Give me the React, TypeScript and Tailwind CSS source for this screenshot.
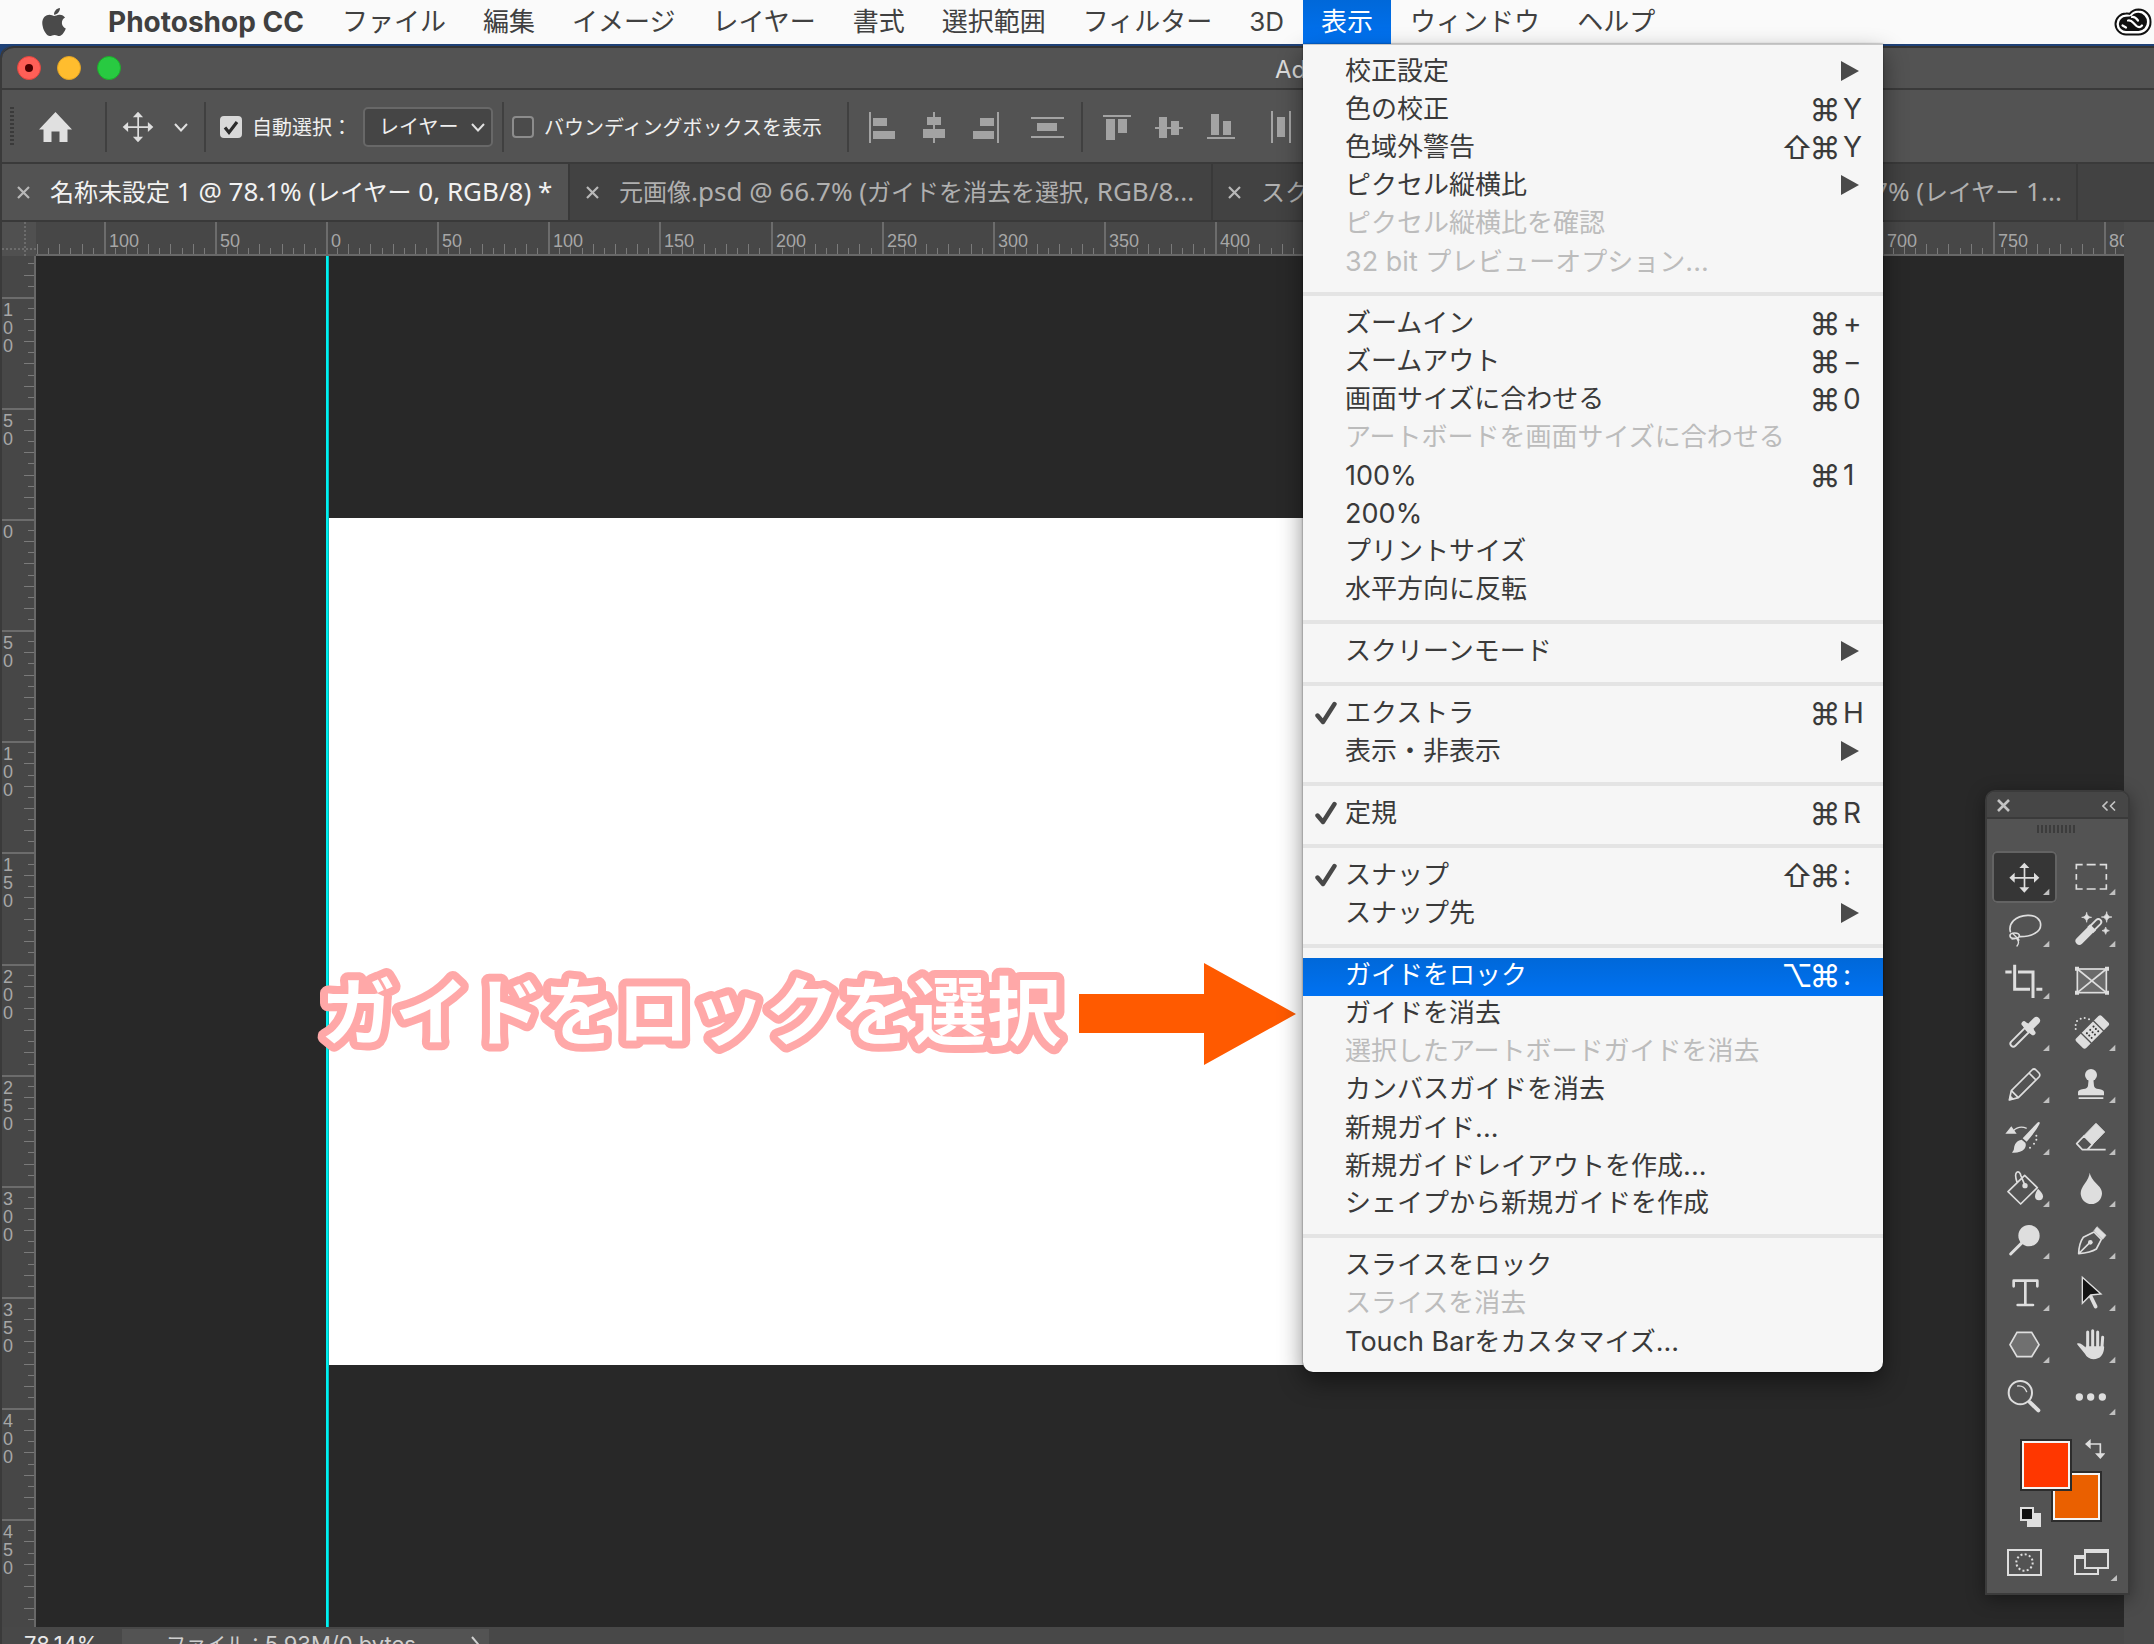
import React from "react";
import { FaApple } from "react-icons/fa";

const JP = "font-['Inter','Noto_Sans_CJK_JP',sans-serif]";
const CJK = "font-['Noto_Sans_CJK_JP',sans-serif]";

// Sets runs of Latin text in their own face and size beside the Japanese text.
function Mixed({ text, latin }: { text: string; latin: string }) {
  return (
    <>
      {text.split(/([\x20-\x7e]+)/).filter(Boolean).map((part, i) =>
        /^[\x20-\x7e]+$/.test(part) ? (
          <span key={i} className={`whitespace-pre ${latin}`}>{part}</span>
        ) : (
          <React.Fragment key={i}>{part}</React.Fragment>
        ),
      )}
    </>
  );
}

type Item = {
  label: string;
  mods?: string[];
  keyName?: string;
  sub?: boolean;
  checked?: boolean;
  disabled?: boolean;
  active?: boolean;
};

const groups: Item[][] = [
  [
    { label: "校正設定", sub: true },
    { label: "色の校正", mods: ["⌘"], keyName: "Y" },
    { label: "色域外警告", mods: ["⇧", "⌘"], keyName: "Y" },
    { label: "ピクセル縦横比", sub: true },
    { label: "ピクセル縦横比を確認", disabled: true },
    { label: "32 bit プレビューオプション...", disabled: true },
  ],
  [
    { label: "ズームイン", mods: ["⌘"], keyName: "+" },
    { label: "ズームアウト", mods: ["⌘"], keyName: "−" },
    { label: "画面サイズに合わせる", mods: ["⌘"], keyName: "0" },
    { label: "アートボードを画面サイズに合わせる", disabled: true },
    { label: "100%", mods: ["⌘"], keyName: "1" },
    { label: "200%" },
    { label: "プリントサイズ" },
    { label: "水平方向に反転" },
  ],
  [{ label: "スクリーンモード", sub: true }],
  [
    { label: "エクストラ", mods: ["⌘"], keyName: "H", checked: true },
    { label: "表示・非表示", sub: true },
  ],
  [{ label: "定規", mods: ["⌘"], keyName: "R", checked: true }],
  [
    { label: "スナップ", mods: ["⇧", "⌘"], keyName: ":", checked: true },
    { label: "スナップ先", sub: true },
  ],
  [
    { label: "ガイドをロック", mods: ["⌥", "⌘"], keyName: ":", active: true },
    { label: "ガイドを消去" },
    { label: "選択したアートボードガイドを消去", disabled: true },
    { label: "カンバスガイドを消去" },
    { label: "新規ガイド..." },
    { label: "新規ガイドレイアウトを作成..." },
    { label: "シェイプから新規ガイドを作成" },
  ],
  [
    { label: "スライスをロック" },
    { label: "スライスを消去", disabled: true },
    { label: "Touch Barをカスタマイズ..." },
  ],
];

function MenuRow({ item }: { item: Item }) {
  const tone = item.active
    ? "bg-linear-to-b from-[#0068d9] to-[#0072f2] text-white"
    : item.disabled
      ? "text-[#bcbcbc]"
      : "text-[#3a3a3a]";
  return (
    <button
      type="button"
      role="menuitem"
      disabled={item.disabled}
      className={`flex h-[38px] w-full items-center pb-1 pl-3 text-left text-[26px] leading-none whitespace-nowrap ${tone}`}
    >
      <span className="flex w-[30px] shrink-0 items-center">
        {item.checked && (
          <svg viewBox="0 0 22 24" className="h-6 w-[22px]" aria-hidden="true">
            <path d="M2.5 14.5 8 21 19.5 3" fill="none" stroke="#484848" strokeWidth="4.4" strokeLinecap="round" strokeLinejoin="round" />
          </svg>
        )}
      </span>
      <span className="flex-1"><Mixed text={item.label} latin="text-[27px] leading-none" /></span>
      {item.sub && (
        <svg viewBox="0 0 18 20" className="mr-6 h-5 w-[18px]" aria-hidden="true">
          <path d="M0 0 18 10 0 20Z" fill="#4a4a4a" />
        </svg>
      )}
      {item.mods && (
        <span className="flex shrink-0 items-center">
          {item.mods.map((m) => (
            <span key={m} className="flex w-7 justify-center text-[31px] leading-none">{m}</span>
          ))}
          <span className="ml-1 w-10 text-[28px] leading-none">{item.keyName}</span>
        </span>
      )}
    </button>
  );
}

function ViewMenu() {
  return (
    <div
      role="menu"
      aria-label="表示"
      className="absolute top-full left-0 z-30 w-[580px] rounded-b-[10px] border-t border-[#c8c8c8] bg-[#f6f6f6] pt-[9px] pb-[10px] font-normal shadow-[0_10px_24px_rgba(0,0,0,0.45),0_0_2px_rgba(0,0,0,0.6)]"
    >
      {groups.map((g, i) => (
        <div key={i} role="group">
          {i > 0 && <div role="separator" className="my-[10px] h-1 bg-[#e4e4e4]" />}
          {g.map((it) => (
            <MenuRow key={it.label} item={it} />
          ))}
        </div>
      ))}
    </div>
  );
}

function MenuBar() {
  const left = ["ファイル", "編集", "イメージ", "レイヤー", "書式", "選択範囲", "フィルター", "3D"];
  const right = ["ウィンドウ", "ヘルプ"];
  const cls = "h-11 shrink-0 px-[18px] text-[26px] leading-none whitespace-nowrap";
  return (
    <nav className={`relative z-30 flex h-11 shrink-0 items-center gap-px bg-[#fafafa] text-[#404040] ${JP}`}>
      <button type="button" aria-label="Apple" className="ml-10 flex w-7 justify-center">
        <FaApple className="h-8 w-8 shrink-0 text-[#4a4a4a]" />
      </button>
      <button type="button" className="ml-[21px] h-11 w-[233px] shrink-0 pl-[18px] text-left text-[28px] leading-none font-bold whitespace-nowrap">
        Photoshop CC
      </button>
      {left.map((t) => (
        <button key={t} type="button" className={cls}>{t}</button>
      ))}
      <div className="relative shrink-0">
        <button type="button" aria-expanded="true" className={`${cls} block bg-linear-to-b from-[#0068d9] to-[#0072f2] text-white`}>表示</button>
        <ViewMenu />
      </div>
      {right.map((t) => (
        <button key={t} type="button" className={cls}>{t}</button>
      ))}
      <button type="button" aria-label="Creative Cloud" className="mr-[2px] ml-auto">
        <svg viewBox="0 0 38 28" className="h-7 w-[38px]" aria-hidden="true">
          <path d="M24.5 1.5A12 12 0 0 1 36.500 14 12.200 12.200 0 0 1 24.500 26.500H12A10.600 10.600 0 0 1 1.500 16 10.600 10.600 0 0 1 12 5.500Q14 5.300 15.500 5.800A12 12 0 0 1 24.500 1.500Z" fill="#fff" stroke="#111" strokeWidth="2" />
          <path d="M24.500 4.800A9 9 0 0 1 33 14 9 9 0 0 1 24.500 23H12A7.300 7.300 0 0 1 4.800 16 7.300 7.300 0 0 1 12 8.800Q15.500 8.600 17.600 8A8.500 8.500 0 0 1 24.500 4.800Z" fill="#111" />
          <path d="M12 19.500 8.500 17.500M14 12.500Q17 12 19 14.500L22.500 18Q25.500 20.500 28 17.500M18 9Q21 8.500 24 12.500" fill="none" stroke="#fff" strokeWidth="2.200" strokeLinecap="round" />
        </svg>
      </button>
    </nav>
  );
}

function TitleBar() {
  return (
    <header className="flex h-[44px] shrink-0 items-center rounded-tl-[12px] border-t-2 border-b-2 border-t-[#343434] border-b-[#3a3a3a] bg-[#535353] pl-[15px]">
      <div className="flex gap-4">
        <button type="button" aria-label="閉じる" className="flex size-6 items-center justify-center rounded-full border border-[#e2463f] bg-[#ff5f57]">
          <span className="size-2 rounded-full bg-[#4d0000]" />
        </button>
        <button type="button" aria-label="しまう" className="size-6 rounded-full border border-[#e1a325] bg-[#ffbd2e]" />
        <button type="button" aria-label="フルスクリーン" className="size-6 rounded-full border border-[#1dad2b] bg-[#28ca41]" />
      </div>
      <h1 className={`ml-[1154px] pt-1 text-2xl leading-none whitespace-nowrap text-[#dcdcdc] ${JP}`}>Adobe Photoshop CC 2019</h1>
    </header>
  );
}

function Divider({ className = "" }: { className?: string }) {
  return <span className={`h-[50px] w-[2px] shrink-0 bg-[#404040] ${className}`} />;
}

function Chevron({ className = "" }: { className?: string }) {
  return (
    <svg viewBox="0 0 14 9" className={`h-[9px] w-[14px] ${className}`} aria-hidden="true">
      <path d="M1 1 7 7.500 13 1" fill="none" stroke="#e0e0e0" strokeWidth="2" />
    </svg>
  );
}

function MoveGlyph() {
  return (
    <g fill="#dedede">
      <path d="M192 262h5v62h-5zM163 291h62v5h-62z" />
      <path d="M194 248 209 264H179ZM194 338 209 322H179ZM149 293 165 278V308ZM239 293 223 278V308Z" />
    </g>
  );
}

function Check({ on, label }: { on: boolean; label: string }) {
  return (
    <label className="flex items-center gap-[10px] text-xl leading-none whitespace-nowrap text-[#efefef]">
      <span className="relative flex size-[22px]">
        <input
          type="checkbox"
          defaultChecked={on}
          className="size-[22px] appearance-none rounded-[4px] border-2 border-[#8c8c8c] bg-[#4b4b4b] checked:border-[#d8d8d8] checked:bg-[#d8d8d8]"
        />
        {on && (
          <svg viewBox="0 0 22 22" className="pointer-events-none absolute inset-0 size-[22px]" aria-hidden="true">
            <path d="M5 11.500 9 16.500 17 6" fill="none" stroke="#2b2b2b" strokeWidth="3.200" />
          </svg>
        )}
      </span>
      <span>{label}</span>
    </label>
  );
}

const aligns: { w: number; cls: string; name: string; d: string }[] = [
  { name: "左端揃え", w: 26, cls: "ml-5 w-[26px]", d: "M0 1h2v31H0zM4 7h14v8H4zM4 20h22v8H4z" },
  { name: "水平方向中央揃え", w: 22, cls: "ml-7 w-[22px]", d: "M10 1h2v31h-2zM4 6h14v8H4zM0 18h22v9H0z" },
  { name: "右端揃え", w: 26, cls: "ml-7 w-[26px]", d: "M24 1h2v31h-2zM7 7h14v8H7zM0 20h21v8H0z" },
  { name: "垂直方向に分布", w: 33, cls: "ml-8 w-[33px]", d: "M0 6h33v2H0zM6 12h20v8H6zM0 25h33v2H0z" },
  { name: "上端揃え", w: 28, cls: "ml-5 w-[28px]", d: "M0 4h28v2H0zM3 8h9v21H3zM15 8h9v14h-9z" },
  { name: "垂直方向中央揃え", w: 28, cls: "ml-6 w-[28px]", d: "M0 16h28v2H0zM4 6h8v21H4zM16 10h8v14h-8z" },
  { name: "下端揃え", w: 28, cls: "ml-6 w-[28px]", d: "M0 26h28v2H0zM4 3h8v21H4zM16 10h8v14h-8z" },
  { name: "水平方向に分布", w: 20, cls: "ml-9 w-[20px]", d: "M0 0h2v32H0zM18 0h2v32h-2zM6 6h8v20H6z" },
];

function AlignButton({ a }: { a: (typeof aligns)[number] }) {
  return (
    <button type="button" aria-label={a.name} className={`h-8 shrink-0 ${a.cls}`}>
      <svg viewBox={`0 0 ${a.w} 32`} className="h-8 w-full" aria-hidden="true">
        <path d={a.d} fill="#a3a3a3" />
      </svg>
    </button>
  );
}

function OptionsBar() {
  return (
    <div className={`flex h-[74px] shrink-0 items-center border-b-2 border-[#3a3a3a] bg-[#535353] pt-[2px] pl-2 ${CJK}`}>
      <span className="h-10 w-1 bg-[repeating-linear-gradient(to_bottom,#3a3a3a_0_2px,#535353_2px_4px)]" />
      <button type="button" aria-label="ホーム" className="ml-[25px]">
        <svg viewBox="0 0 33 30" className="h-[30px] w-[33px]" aria-hidden="true">
          <path d="M16.500 0 33 17.500H28.500V30H20.500V19.500H12.500V30H4.500V17.500H0Z" fill="#e0e0e0" />
        </svg>
      </button>
      <Divider className="ml-[33px]" />
      <button type="button" aria-label="移動ツール" className="ml-[15px] flex items-center gap-5">
        <svg viewBox="147 246 94 94" className="size-8" aria-hidden="true"><MoveGlyph /></svg>
        <Chevron />
      </button>
      <Divider className="ml-4" />
      <div className="ml-[14px]"><Check on label="自動選択：" /></div>
      <div className="relative ml-[11px] flex items-center">
        <select
          aria-label="自動選択の対象"
          className="h-10 w-[130px] appearance-none rounded-[5px] border-2 border-[#686868] bg-[#454545] pb-[2px] pl-[14px] text-xl leading-none text-[#efefef]"
        >
          <option>レイヤー</option>
        </select>
        <Chevron className="pointer-events-none absolute right-2" />
      </div>
      <Divider className="ml-[9px]" />
      <div className="ml-2"><Check on={false} label="バウンディングボックスを表示" /></div>
      <Divider className="ml-[25px]" />
      {aligns.slice(0, 4).map((a) => <AlignButton key={a.name} a={a} />)}
      <Divider className="ml-[17px]" />
      {aligns.slice(4).map((a) => <AlignButton key={a.name} a={a} />)}
    </div>
  );
}

function Tab({ label, active, className }: { label: string; active?: boolean; className: string }) {
  return (
    <div
      className={`flex h-full shrink-0 items-center overflow-hidden border-r-2 border-[#393939] whitespace-nowrap ${active ? "bg-[#535353] text-[#f2f2f2]" : "bg-[#424242] text-[#b0b0b0]"} ${className}`}
    >
      <button type="button" aria-label="タブを閉じる" className="shrink-0">
        <svg viewBox="0 0 13 13" className="size-[13px]" aria-hidden="true">
          <path d="M1 1 12 12M12 1 1 12" stroke="#b8b8b8" strokeWidth="2.200" />
        </svg>
      </button>
      <button type="button" role="tab" aria-selected={!!active} className="ml-5 flex-1 pb-[2px] text-left text-2xl leading-none">
        <Mixed text={label} latin="font-['Noto_Sans',sans-serif] text-[26px] leading-none" />
      </button>
    </div>
  );
}

function Tabs() {
  return (
    <div role="tablist" className={`flex h-[58px] shrink-0 border-b-2 border-[#393939] bg-[#424242] ${CJK}`}>
      <Tab active label="名称未設定 1 @ 78.1% (レイヤー 0, RGB/8) *" className="w-[568px] pl-[15px]" />
      <Tab label="元画像.psd @ 66.7% (ガイドを消去を選択, RGB/8..." className="w-[643px] pl-4" />
      <Tab label="スクリーンショット.png" className="w-[430px] pl-[15px]" />
      <Tab label="背景.psd @ 66.7% (レイヤー 1..." className="w-[435px] pl-6" />
    </div>
  );
}

const STEP = 11.113;
const range = (from: number, to: number) => Array.from({ length: to - from + 1 }, (_, i) => i + from);

function TopRuler() {
  const ticks = range(-26, 164);
  return (
    <div className="h-[34px] flex-1 overflow-hidden border-b-2 border-[#686868] bg-[#474747]">
      <svg width="100%" height="32" className="block" role="img" aria-label="水平定規">
        {ticks.map((i) => {
          const x = Math.round(290 + i * STEP);
          const major = i % 10 === 0;
          const h = major ? 32 : i % 2 === 0 ? 10 : 6;
          return <rect key={i} x={x} y={32 - h} width={major ? 2 : 1} height={h} fill={major ? "#6c6c6c" : "#7a7a7a"} />;
        })}
        {ticks.filter((i) => i % 10 === 0).map((i) => (
          <text key={i} x={Math.round(295 + i * STEP)} y="25" fontSize="18" fill="#a6a6a6" className="font-['Liberation_Sans',sans-serif]">
            {Math.abs(i * 5)}
          </text>
        ))}
      </svg>
    </div>
  );
}

function SideRuler() {
  const ticks = range(-23, 100);
  return (
    <div className="w-[34px] shrink-0 overflow-hidden border-r-2 border-[#686868] bg-[#474747]">
      <svg width="32" height="1372" className="block" role="img" aria-label="垂直定規">
        {ticks.map((i) => {
          const y = Math.round(263 + i * STEP);
          const major = i % 10 === 0;
          const w = major ? 32 : i % 2 === 0 ? 10 : 6;
          return <rect key={i} x={32 - w} y={y} width={w} height={major ? 2 : 1} fill={major ? "#6c6c6c" : "#7a7a7a"} />;
        })}
        {ticks.filter((i) => i % 10 === 0).map((i) =>
          String(Math.abs(i * 5)).split("").map((c, k) => (
            <text key={`${i}-${k}`} x="1" y={Math.round(282 + i * STEP + k * 18)} fontSize="18" fill="#a6a6a6" className="font-['Liberation_Sans',sans-serif]">
              {c}
            </text>
          )),
        )}
      </svg>
    </div>
  );
}

function Canvas() {
  return (
    <div className="relative min-w-0 flex-1 overflow-hidden bg-[#282828]">
      <div className="mt-[262px] ml-[292px] h-[847px] w-[1180px] bg-white" />
      <div className="absolute inset-y-0 left-[290px] w-[3px] border-r border-black/20 bg-[#00f0f0]" />
      <svg viewBox="0 0 770 110" className="absolute top-[700px] left-[275px] h-[110px] w-[770px]" role="img" aria-label="ガイドをロックを選択">
        <text
          x="10"
          y="83"
          fontSize="74"
          fill="#fff"
          stroke="#ffa8a8"
          strokeWidth="16"
          strokeLinejoin="round"
          paintOrder="stroke"
          className={`font-bold ${CJK}`}
        >
          ガイドをロックを選択
        </text>
      </svg>
      <svg viewBox="0 0 217 102" className="absolute top-[707px] left-[1043px] h-[102px] w-[217px]" aria-hidden="true">
        <path d="M0 31H125V0L217 51 125 102V70H0Z" fill="#ff5a00" />
      </svg>
    </div>
  );
}

function star(x: number, y: number, r: number) {
  return `M${x} ${y - r}Q${x + 1} ${y - 1} ${x + r} ${y}Q${x + 1} ${y + 1} ${x} ${y + r}Q${x - 1} ${y + 1} ${x - r} ${y}Q${x - 1} ${y - 1} ${x} ${y - r}Z`;
}

const W = "#dedede";
const BG = "#535353";

// Each tool is drawn in a 195 x 156 cell whose origin is (x, y).
const tools: { name: string; x: number; y: number; plain?: boolean; art: React.ReactNode }[] = [
  { name: "移動", x: 97, y: 213, art: <MoveGlyph /> },
  {
    name: "長方形選択", x: 294, y: 213,
    art: <path d="M349 268V254H368M380 254H407M419 254H439V268M349 282V299M439 282V299M349 313V327H368M380 327H407M419 327H439V313" fill="none" stroke={W} strokeWidth="5" />,
  },
  {
    name: "なげなわ", x: 97, y: 370,
    art: (
      <g fill="none" stroke={W} strokeWidth="5" strokeLinecap="round">
        <path d="M152 456C146 432 166 408 204 407C230 406 243 420 243 436C243 456 218 471 182 471" />
        <ellipse cx="165" cy="468" rx="14" ry="8" />
        <path d="M160 462Q170 472 178 481M176 474Q164 478 157 478M172 478Q181 488 172 499" strokeWidth="4" />
      </g>
    ),
  },
  {
    name: "自動選択", x: 294, y: 370,
    art: (
      <g>
        <path d="M358 484 415 427" stroke={W} strokeWidth="23" strokeLinecap="round" />
        <path d="M399 443 415 427" stroke={BG} strokeWidth="12" strokeLinecap="round" />
        <path d="M386 438 404 456" stroke={W} strokeWidth="12" />
        <path d={star(380, 413, 15) + star(440, 412, 16) + star(437, 453, 11)} fill={W} stroke={W} strokeWidth="2" />
      </g>
    ),
  },
  {
    name: "切り抜き", x: 97, y: 526,
    art: <path d="M137 577H156M165 555V629H211M175 577H220V655M230 629H248" fill="none" stroke={W} strokeWidth="9" />,
  },
  {
    name: "フレーム", x: 294, y: 526, plain: true,
    art: (
      <g>
        <rect x="352" y="568" width="87" height="71" fill="#6b6b6b" stroke={W} strokeWidth="5" />
        <path d="M352 568 439 639M439 568 352 639" stroke={W} strokeWidth="5" />
        <path d="M345 561h12v12h-12zM435 561h12v12h-12zM345 633h12v12h-12zM435 633h12v12h-12z" fill={W} />
      </g>
    ),
  },
  {
    name: "スポイト", x: 97, y: 683,
    art: (
      <g strokeLinecap="round">
        <path d="M161 793 205 749" stroke={W} strokeWidth="23" />
        <path d="M161 793 203 751" stroke={BG} strokeWidth="12" />
        <path d="M207 747 230 724" stroke={W} strokeWidth="22" />
        <path d="M193 733 220 760" stroke={W} strokeWidth="15" />
        <path d="M200 740 214 754" stroke={W} strokeWidth="18" />
      </g>
    ),
  },
  {
    name: "スポット修復ブラシ", x: 294, y: 683,
    art: (
      <g>
        <g transform="translate(397 758) rotate(-45)">
          <rect x="-54" y="-21" width="108" height="42" rx="7" fill={W} />
          <path d="M-26-22V22M26-22V22" stroke={BG} strokeWidth="4" />
          <path d="M-14-9h.1M0-9h.1M14-9h.1M-14 1h.1M0 1h.1M14 1h.1M-14 11h.1M0 11h.1M14 11h.1" stroke="#333" strokeWidth="6" strokeLinecap="round" />
        </g>
        <path d="M347 749h.1M347 737h.1M351 725h.1M362 718h.1M374 716h.1M387 720h.1" stroke={W} strokeWidth="6" strokeLinecap="round" />
      </g>
    ),
  },
  {
    name: "鉛筆", x: 97, y: 840,
    art: (
      <g fill="none" stroke={W} strokeWidth="5" strokeLinejoin="round">
        <path d="M149 963 155 935 217 873Q223 867 229 873L238 882Q243 888 238 894L176 956Z" />
        <path d="M208 882 229 903M155 935 176 956" />
        <path d="M149 963 152 950 162 960Z" fill={W} strokeWidth="2" />
      </g>
    ),
  },
  {
    name: "コピースタンプ", x: 294, y: 840,
    art: (
      <g fill={W}>
        <circle cx="393" cy="888" r="18" />
        <path d="M386 900 384 920Q383 929 370 930 354 932 354 940V949H432V940Q432 932 416 930 403 929 402 920L400 900ZM356 955H430V960H356Z" />
      </g>
    ),
  },
  {
    name: "ヒストリーブラシ", x: 97, y: 66,
    art: (
      <g fill={W}>
        <path d="M240 100Q237 97 233 101L189 148 201 158Q228 128 240 104ZM186 152 197 161Q201 171 194 180 181 193 157 191 164 184 164 172 169 154 186 152ZM137 134 155 112 171 134Z" />
        <path d="M160 126Q178 108 201 118" fill="none" stroke={W} strokeWidth="4" />
        <path d="M211 176h.1M223 164h.1M230 152h.1M230 140h.1" stroke={W} strokeWidth="6" strokeLinecap="round" />
      </g>
    ),
  },
  {
    name: "消しゴム", x: 294, y: 66,
    art: (
      <g strokeLinejoin="round">
        <path d="M408 103 434 129 398 166 372 140Z" fill={W} stroke={W} strokeWidth="3" />
        <path d="M372 141 397 166 382 182H367L350 164ZM367 182H437" fill="none" stroke={W} strokeWidth="5" />
      </g>
    ),
  },
  {
    name: "塗りつぶし", x: 97, y: 223,
    art: (
      <g>
        <path d="M183 346 145 309 195 260 233 297ZM172 280C160 245 180 242 184 262L195 288" fill="none" stroke={W} strokeWidth="5" strokeLinejoin="round" />
        <circle cx="196" cy="291" r="8" fill={W} />
        <path d="M235 300Q250 314 250 323A12 12 0 0 1 226 323Q226 314 235 300Z" fill={W} />
      </g>
    ),
  },
  {
    name: "ぼかし", x: 294, y: 223,
    art: <path d="M389 252Q392 268 411 287 426 301 426 314A32 32 0 0 1 362 314Q362 301 374 285 388 266 389 252Z" fill={W} />,
  },
  {
    name: "覆い焼き", x: 97, y: 379,
    art: (
      <g>
        <circle cx="208" cy="441" r="32" fill={W} />
        <path d="M153 496 188 461" stroke={W} strokeWidth="9" strokeLinecap="round" />
      </g>
    ),
  },
  {
    name: "ペン", x: 294, y: 379,
    art: (
      <g>
        <path d="M356 495Q357 464 370 446L402 430 424 452 409 481Q392 492 356 495ZM358 493 390 461" fill="none" stroke={W} strokeWidth="5" strokeLinejoin="round" />
        <circle cx="391" cy="461" r="7" fill={W} />
        <path d="M411 414 438 440 428 452 402 426Z" fill={W} stroke={W} strokeWidth="2" strokeLinejoin="round" />
      </g>
    ),
  },
  {
    name: "横書き文字", x: 97, y: 536,
    art: <path d="M162 594V577H233V594M197 577V650M174 650H220" fill="none" stroke={W} strokeWidth="8" strokeLinecap="round" strokeLinejoin="round" />,
  },
  {
    name: "パス選択", x: 294, y: 536,
    art: (
      <g>
        <path d="M390 620 407 655" stroke={W} strokeWidth="11" strokeLinecap="round" />
        <path d="M367 567 423 617 392 620 367 645Z" fill="#141414" stroke={W} strokeWidth="4" />
      </g>
    ),
  },
  {
    name: "多角形", x: 97, y: 692,
    art: <path d="M151 769 172 732H216L238 769 216 805H172Z" fill="#707070" stroke={W} strokeWidth="5" />,
  },
  {
    name: "手のひら", x: 294, y: 692,
    art: (
      <g stroke={W} strokeLinecap="round" strokeLinejoin="round">
        <path d="M383 731V775M398 727V775M413 731V775M428 747 426 775" strokeWidth="9" />
        <path d="M379 776H430C429 800 418 810 400 810 386 810 380 802 376 794L354 767Q364 766 379 784Z" fill={W} strokeWidth="5" />
      </g>
    ),
  },
  {
    name: "ズーム", x: 97, y: 849, plain: true,
    art: (
      <g fill="none" stroke={W} strokeLinecap="round">
        <circle cx="182" cy="914" r="35" strokeWidth="6" />
        <path d="M174 894Q193 892 201 911" strokeWidth="4" />
        <path d="M211 943 236 967" strokeWidth="12" />
      </g>
    ),
  },
  {
    name: "ツールバーを編集", x: 294, y: 849,
    art: (
      <g fill={W}>
        <circle cx="358" cy="927" r="11" />
        <circle cx="392" cy="927" r="11" />
        <circle cx="427" cy="927" r="11" />
      </g>
    ),
  },
];

function ToolsPanel() {
  return (
    <aside
      aria-label="ツール"
      className="absolute top-[790px] right-6 z-20 w-[145px] rounded-t-[10px] border-2 border-[#3b3b3b] bg-[#535353] pb-3 shadow-[0_4px_18px_rgba(0,0,0,0.4)]"
    >
      <div className="flex h-[27px] items-center justify-between rounded-t-[8px] border-b-2 border-[#3a3a3a] bg-[#464646] pt-[2px] pr-3 pl-[10px]">
        <button type="button" aria-label="パネルを閉じる">
          <svg viewBox="0 0 13 13" className="size-[13px]" aria-hidden="true"><path d="M1 1 12 12M12 1 1 12" stroke="#c4c4c4" strokeWidth="2.600" /></svg>
        </button>
        <button type="button" aria-label="折りたたむ">
          <svg viewBox="0 0 14 10" className="h-[10px] w-[14px]" aria-hidden="true"><path d="M5.500.5 1 5 5.500 9.500M13 .5 8.500 5 13 9.500" fill="none" stroke="#c4c4c4" strokeWidth="1.600" /></svg>
        </button>
      </div>
      <div className="mt-[6px] ml-[50px] h-2 w-[38px] bg-[repeating-linear-gradient(to_right,#3c3c3c_0_2px,#535353_2px_4px)]" />
      <div className="mt-[18px] ml-[5px] grid w-[131px] grid-cols-[65px_65px] gap-x-[1px]">
        {tools.map((t, i) => (
          <button
            key={t.name}
            type="button"
            aria-label={t.name}
            className={i === 0 ? "h-[52px] rounded-[5px] bg-[#363636] inset-ring-2 inset-ring-[#636363]" : "h-[52px]"}
          >
            <svg viewBox={`${t.x} ${t.y} 195 156`} className="block h-[52px] w-[65px]" fill="none" aria-hidden="true">
              {t.art}
              {!t.plain && <path d={`M${t.x + 172} ${t.y + 113}V${t.y + 132}H${t.x + 153}Z`} fill="#c0c0c0" />}
            </svg>
          </button>
        ))}
      </div>
      <div className="relative mt-4 ml-[33px] h-[90px] w-[86px]">
        <button type="button" aria-label="背景色" className="absolute top-8 left-[31px] size-[51px] border-2 border-[#2c2c2c] bg-[#ea6000] inset-ring-2 inset-ring-[#f4f4f4]" />
        <button type="button" aria-label="描画色" className="absolute top-0 left-0 size-[52px] border-2 border-[#2c2c2c] bg-[#ff3700] inset-ring-2 inset-ring-[#f4f4f4]" />
        <button type="button" aria-label="描画色と背景色を入れ替え" className="absolute top-0 left-[65px]">
          <svg viewBox="375 178 60 60" className="size-5" aria-hidden="true">
            <path d="M388 193H421V224" fill="none" stroke={W} strokeWidth="5" />
            <path d="M375 193 392 178V208ZM421 238 436 221H405Z" fill={W} />
          </svg>
        </button>
        <button type="button" aria-label="初期設定の描画色と背景色" className="absolute top-[68px] left-0">
          <svg viewBox="0 0 21 21" className="size-[21px]" aria-hidden="true">
            <rect x="7" y="6" width="14" height="14" fill={W} />
            <rect x="1" y="1" width="12" height="12" fill="#111" stroke={W} strokeWidth="2" />
          </svg>
        </button>
      </div>
      <div className="mt-5 flex items-start gap-8 pl-5">
        <button type="button" aria-label="クイックマスク">
          <svg viewBox="0 0 35 27" className="h-[27px] w-[35px]" aria-hidden="true">
            <rect x="1" y="1" width="33" height="25" fill="none" stroke={W} strokeWidth="2" />
            <circle cx="17.500" cy="13.500" r="8.200" fill="none" stroke={W} strokeWidth="2" strokeDasharray="2 2.290" />
          </svg>
        </button>
        <button type="button" aria-label="スクリーンモードを変更">
          <svg viewBox="0 0 43 32" className="h-8 w-[43px]" aria-hidden="true">
            <path d="M1 7H24V25H1Z" fill="none" stroke={W} strokeWidth="2" />
            <rect x="11" y="1" width="23" height="18" fill={BG} stroke={W} strokeWidth="2" />
            <path d="M1 7h9v3H1zM11 1h23v3H11z" fill={W} />
            <path d="M43 26V32H36.500Z" fill="#c0c0c0" />
          </svg>
        </button>
      </div>
    </aside>
  );
}

function StatusBar() {
  return (
    <footer className="h-[17px] shrink-0 overflow-hidden bg-[#484848]">
      <div className={`flex h-[34px] items-center text-xl leading-none whitespace-nowrap ${JP}`}>
        <span className="w-[120px] pl-[22px] text-[22px] leading-none text-[#e8e8e8]">78.14%</span>
        <span className="mt-[2px] flex h-8 w-[367px] items-center justify-between bg-[#535353] pr-[10px] pb-[2px] pl-[44px] text-[#cfcfcf]">
          <span><Mixed text="ファイル : 5.93M/0 bytes" latin="text-[22px] leading-none" /></span>
          <svg viewBox="0 0 8 16" className="h-4 w-2" aria-hidden="true"><path d="M1 1 7 8 1 15" fill="none" stroke="#d0d0d0" strokeWidth="2" /></svg>
        </span>
      </div>
    </footer>
  );
}

export default function App() {
  return (
    <div className="relative flex h-screen flex-col overflow-hidden bg-[#1f4278]">
      <MenuBar />
      <main className="mt-[2px] flex min-h-0 flex-1 flex-col overflow-hidden rounded-tl-[12px] border-l-2 border-[#3a3a3a]">
        <TitleBar />
        <OptionsBar />
        <Tabs />
        <div className="flex min-h-0 flex-1">
          <div className="flex min-w-0 flex-1 flex-col">
            <div className="flex shrink-0">
              <div className="relative size-[34px] shrink-0 bg-[#505050]">
                <span className="absolute inset-y-0 left-[22px] border-l-2 border-dotted border-[#6c6c6c]" />
                <span className="absolute inset-x-0 top-[26px] border-t-2 border-dotted border-[#6c6c6c]" />
              </div>
              <TopRuler />
            </div>
            <div className="flex min-h-0 flex-1">
              <SideRuler />
              <Canvas />
            </div>
            <StatusBar />
          </div>
          <div className="w-[30px] shrink-0 bg-[#4b4b4b]" />
        </div>
      </main>
      <ToolsPanel />
    </div>
  );
}
